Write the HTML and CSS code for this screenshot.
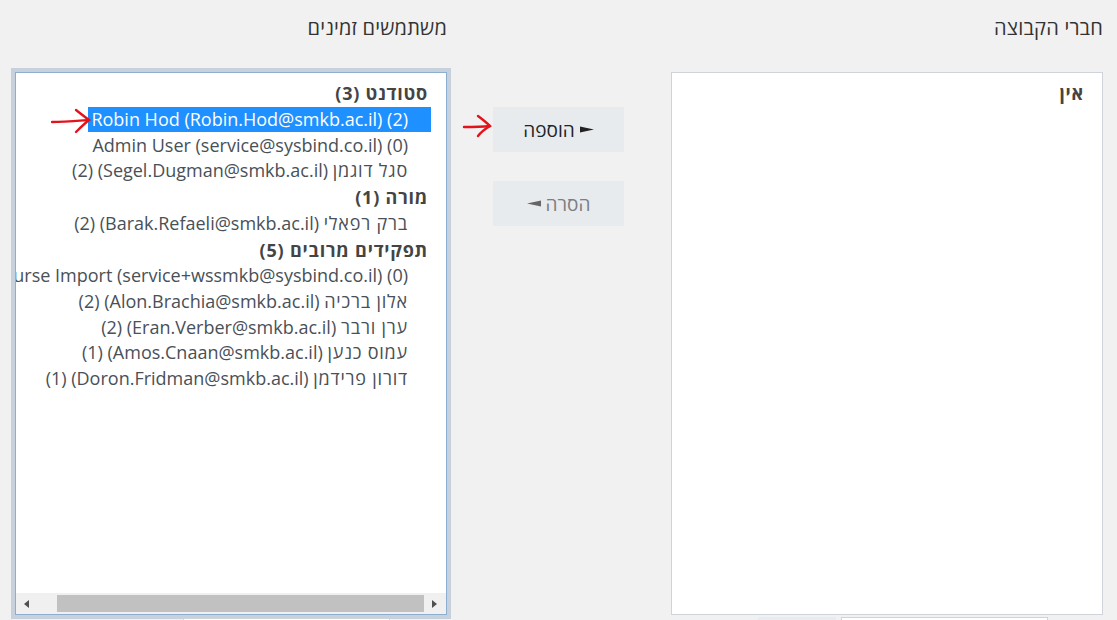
FILE: index.html
```html
<!DOCTYPE html>
<html lang="he" dir="rtl">
  <head>
    <meta charset="utf-8">
    <title>חברי הקבוצה</title>
    <link rel="stylesheet" href="styles.css">
  </head>
  <body>
    <div class="page">
      <div class="col">
        <h2 class="col-title">חברי הקבוצה</h2>
        <div class="listbox">
          <div class="list-body">
            <div class="group">אין</div>
          </div>
        </div>
      </div>

      <div class="actions">
        <button type="button" class="btn">
          <svg class="pointer" width="14" height="7" viewBox="0 0 14 7"><polygon points="0,0.5 14,3.5 0,6.5" /></svg>&nbsp;הוספה
        </button>
        <button type="button" class="btn disabled">
          הסרה&nbsp;<svg class="pointer" width="14" height="7" viewBox="0 0 14 7"><polygon points="14,0.5 0,3.5 14,6.5" /></svg>
        </button>
      </div>

      <div class="col">
        <h2 class="col-title">משתמשים זמינים</h2>
        <div class="listbox focused">
          <div class="list-body">
            <div class="group">סטודנט (3)</div>
            <div class="opt selected">Robin Hod (Robin.Hod@smkb.ac.il) (2)</div>
            <div class="opt">Admin User (service@sysbind.co.il) (0)</div>
            <div class="opt"><span class="he">סגל דוגמן</span> (Segel.Dugman@smkb.ac.il) (2)</div>
            <div class="group">מורה (1)</div>
            <div class="opt"><span class="he">ברק רפאלי</span> (Barak.Refaeli@smkb.ac.il) (2)</div>
            <div class="group">תפקידים מרובים (5)</div>
            <div class="opt">Course Import (service+wssmkb@sysbind.co.il) (0)</div>
            <div class="opt"><span class="he">אלון ברכיה</span> (Alon.Brachia@smkb.ac.il) (2)</div>
            <div class="opt"><span class="he">ערן ורבר</span> (Eran.Verber@smkb.ac.il) (2)</div>
            <div class="opt"><span class="he">עמוס כנען</span> (Amos.Cnaan@smkb.ac.il) (1)</div>
            <div class="opt"><span class="he">דורון פרידמן</span> (Doron.Fridman@smkb.ac.il) (1)</div>
          </div>
          <div class="hscroll">
            <span class="arrow-left"></span>
            <div class="track"><div class="thumb"></div></div>
            <span class="arrow-right"></span>
          </div>
        </div>
      </div>
    </div>

    <div class="below">
      <div class="below-field"></div>
      <div class="below-btn"></div>
      <div class="below-gap"></div>
      <div class="below-field left"></div>
    </div>

    <!-- annotation arrows drawn over the screenshot -->
    <svg class="mark mark-list" width="42" height="26" viewBox="0 0 42 26">
      <path d="M1 14 C12 14 24 13 38 12" />
      <path d="M25 2 C30 6 34 9 38 12 C33 16 29 20 25 24" />
    </svg>
    <svg class="mark mark-btn" width="32" height="24" viewBox="0 0 32 24">
      <path d="M2 13 C10 13 18 13 28 12" />
      <path d="M16 2 C20 5 24 8 28 12 C23 15 19 18 16 22" />
    </svg>
  </body>
</html>
```

FILE: styles.css
```css
html, body {
  margin: 0;
  padding: 0;
}
body {
  background: #f1f1f1;
  font-family: "Open Sans", "Liberation Sans", sans-serif;
  color: #495057;
  direction: rtl;
  position: relative;
  overflow: hidden;
  height: 620px;
}
.page {
  display: flex;
  align-items: flex-start;
  padding: 17px 14px 0 0;
}
.col {
  width: 432px;
}
.col-title {
  margin: 0 0 33px 0;
  font-size: 20px;
  font-weight: 400;
  line-height: 22px;
  color: #333;
  letter-spacing: 0.2px;
}
.listbox {
  height: 541px;
  background: #fff;
  border: 1px solid #ced4da;
  display: flex;
  flex-direction: column;
}
.listbox.focused {
  border-color: #8eaed0;
  box-shadow: 0 0 0 4px #c6d1dd;
}
.list-body {
  flex: 1;
  overflow: hidden;
  padding: 7px 15px 0 0;
  font-size: 18px;
  line-height: 26.3px;
}
.group {
  font-weight: 700;
  color: #444;
  padding: 0 3px;
  white-space: nowrap;
  letter-spacing: 0.8px;
}
.opt {
  width: fit-content;
  white-space: nowrap;
  padding: 0 23px 0 3px;
  line-height: 25px;
  margin: 0.6px 0 0.7px;
}
.opt .he {
  letter-spacing: 0.8px;
}
.opt.selected {
  background: #1e90ff;
  color: #fff;
}
.hscroll {
  height: 21px;
  background: #f0f0f0;
  display: flex;
  align-items: center;
  direction: ltr;
}
.track {
  flex: 1;
  height: 17px;
  padding: 0 8px 0 28px;
}
.thumb {
  height: 17px;
  background: #c1c1c1;
}
.arrow-left, .arrow-right {
  width: 0;
  height: 0;
  border-top: 4px solid transparent;
  border-bottom: 4px solid transparent;
}
.arrow-left {
  margin-left: 8px;
  border-right: 5px solid #505050;
}
.arrow-right {
  margin-right: 9px;
  border-left: 5px solid #505050;
}
.actions {
  width: 131px;
  margin: 90px 47px 0 46px;
  display: flex;
  flex-direction: column;
  gap: 29px;
}
.btn {
  height: 45px;
  border: none;
  border-radius: 0;
  background: #e8ebee;
  font-family: "Open Sans", "Liberation Sans", sans-serif;
  font-size: 19px;
  color: #212529;
  padding: 0;
  display: flex;
  align-items: center;
  justify-content: center;
}
.btn .pointer {
  fill: #222;
}
.btn.disabled {
  color: #7b7e82;
}
.btn.disabled .pointer {
  fill: #666;
}
.below {
  display: flex;
  margin-top: 2px;
  padding-right: 69px;
}
.below-field {
  width: 205px;
  height: 20px;
  background: #fff;
  border: 1px solid #ced4da;
}
.below-btn {
  width: 78px;
  height: 20px;
  margin-right: 5px;
  background: #eaebef;
}
.below-gap {
  width: 368px;
}
.below-field.left {
  margin-top: 1px;
}
.mark {
  position: absolute;
  fill: none;
  stroke: #e3131c;
  stroke-width: 2.4;
  stroke-linecap: round;
}
.mark-list {
  left: 51px;
  top: 108px;
}
.mark-btn {
  left: 462px;
  top: 114px;
}
```
